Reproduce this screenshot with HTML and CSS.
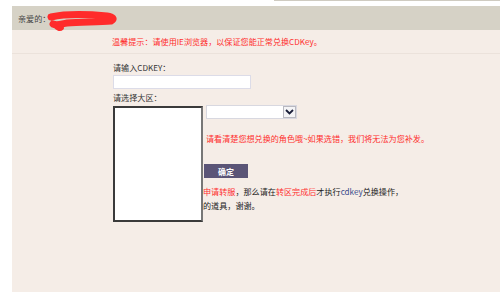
FILE: index.html
```html
<!DOCTYPE html>
<html lang="zh-CN">
<head>
    <meta charset="UTF-8">
    <title>CDKEY兑换</title>
    <link rel="stylesheet" href="styles.css">
</head>
<body>
    <div class="top-strip"><div class="top-line"></div></div>

    <div class="cdkey-box">
        <!-- 顶部问候 -->
        <div class="cdkey-header">
            <span>亲爱的：</span>
            <svg class="scribble" width="74" height="22" viewBox="0 0 74 22">
                <path d="M6 7 C20 4, 40 4, 62 6 C68 7, 70 9, 66 11 C54 12, 36 12, 22 13 C16 14, 12 16, 8 14" fill="none" stroke="#ff2b2b" stroke-width="7" stroke-linecap="round" stroke-linejoin="round"/>
                <path d="M10 16 C12 19, 15 20, 17 18" fill="none" stroke="#ff2b2b" stroke-width="4" stroke-linecap="round"/>
            </svg>
        </div>

        <div class="cdkey-notice">温馨提示：请使用IE浏览器，以保证您能正常兑换CDKey。</div>

        <form class="cdkey-form">
            <label class="form-label" for="cdkey">请输入CDKEY：</label>
            <input type="text" id="cdkey" class="cdkey-input">
            <div class="form-label">请选择大区：</div>

            <div class="server-row">
                <div class="server-list"></div>
                <div class="server-right">
                    <div class="fake-select">
                        <span class="fake-select-arrow">
                            <svg width="9" height="6" viewBox="0 0 9 6"><path d="M1 1 L4.5 4.5 L8 1" fill="none" stroke="#1a1f3a" stroke-width="1.8"/></svg>
                        </span>
                    </div>
                    <div class="warn-text">请看清楚您想兑换的角色哦~如果选错，我们将无法为您补发。</div>
                    <button type="button" class="submit-btn">确定</button>
                    <p class="tips">
                        <span class="red">申请转服</span>，那么请在<span class="red">转区完成后</span>才执行<span class="blue">cdkey</span>兑换操作，<br>的道具，谢谢。
                    </p>
                </div>
            </div>
        </form>
    </div>
</body>
</html>
```

FILE: styles.css
```css
* {
    margin: 0;
    padding: 0;
    box-sizing: border-box;
}

body {
    font-family: "Noto Sans CJK SC", "Liberation Sans", sans-serif;
    font-size: 8.1px;
    color: #222;
    background: #fff;
    width: 500px;
    height: 293px;
    overflow: hidden;
}

.top-strip {
    height: 6px;
}

.top-line {
    margin-left: 274px;
    height: 1px;
    background: #cfcbc1;
}

.cdkey-box {
    margin-left: 12px;
    height: 286px;
    background: #f5ede7;
}

.cdkey-header {
    height: 24px;
    background: #d6d2c6;
    display: flex;
    align-items: center;
    padding-left: 6px;
    color: #444;
}

.scribble {
    margin-top: 6px;
    margin-left: -5px;
}

.cdkey-notice {
    height: 24px;
    line-height: 23px;
    padding-left: 100px;
    color: #ff2d2d;
    border-bottom: 1px solid #ebe2db;
}

.cdkey-form {
    padding-left: 101px;
    padding-top: 7px;
}

.form-label {
    display: block;
    line-height: 14px;
    color: #333;
}

.cdkey-input {
    display: block;
    width: 138px;
    height: 14px;
    border: 1px solid #dcdce8;
    background: #fff;
    margin-bottom: 2px;
}

.server-row {
    display: flex;
    align-items: flex-start;
}

.server-list {
    width: 90px;
    height: 116px;
    margin-top: 1px;
    background: #fff;
    border: 2px solid;
    border-color: #3a3a3a #777 #3a3a3a #3a3a3a;
    position: relative;
    z-index: 2;
}

.server-right {
    margin-left: 3px;
}

.fake-select {
    width: 91px;
    height: 14px;
    background: #fff;
    border: 1px solid #d8d8e0;
    display: flex;
    justify-content: flex-end;
}

.fake-select-arrow {
    width: 13px;
    height: 12px;
    border: 1px solid #b8b8c0;
    background: #f4f4f6;
    display: flex;
    align-items: center;
    justify-content: center;
}

.warn-text {
    margin-top: 13px;
    line-height: 14px;
    color: #ff2d2d;
    white-space: nowrap;
}

.submit-btn {
    display: block;
    margin-top: 18px;
    margin-left: -2px;
    width: 44px;
    height: 14px;
    border: none;
    background: #5b5577;
    color: #fff;
    font-family: inherit;
    font-size: 8px;
    font-weight: bold;
}

.tips {
    margin-top: 7px;
    margin-left: -3px;
    line-height: 14px;
    white-space: nowrap;
}

.red {
    color: #ff2d2d;
}

.blue {
    color: #3a4a8a;
}
```
